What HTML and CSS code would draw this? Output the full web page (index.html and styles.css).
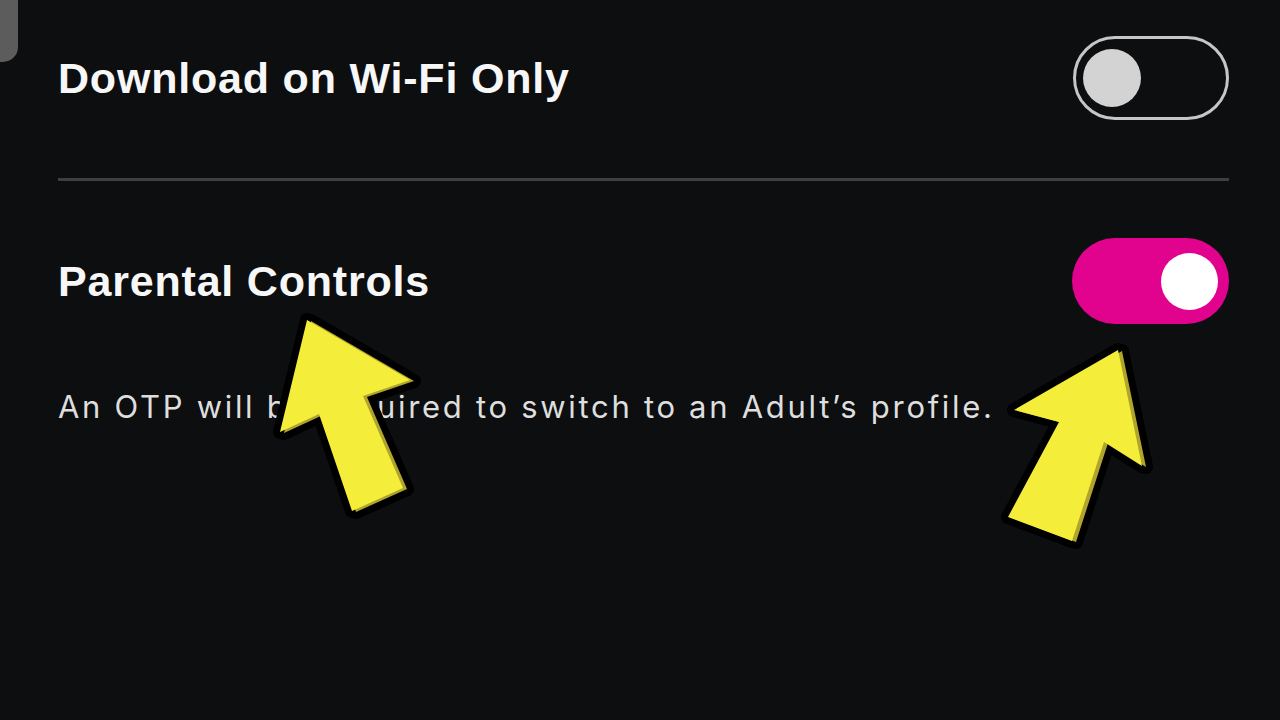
FILE: index.html
```html
<!DOCTYPE html>
<html lang="en">
<head>
  <meta charset="UTF-8">
  <meta name="viewport" content="width=device-width, initial-scale=1.0">
  <title>Settings</title>
  <link rel="stylesheet" href="styles.css">
</head>
<body>
  <div class="edge-tab"></div>

  <div class="settings">
    <div class="row row-first">
      <span class="row-title">Download on Wi-Fi Only</span>
      <div class="toggle"><span class="knob"></span></div>
    </div>

    <div class="divider"></div>

    <div class="row row-second">
      <span class="row-title">Parental Controls</span>
      <div class="toggle on"><span class="knob"></span></div>
    </div>

    <p class="hint">An OTP will be required to switch to an Adult’s profile.</p>
  </div>

  <!-- pointer arrows drawn over the screen -->
  <svg class="arrows" width="1280" height="720" viewBox="0 0 1280 720">
    <g fill="#000" stroke="#000" stroke-width="14" stroke-linejoin="round">
      <polygon points="307,320 410,380 363,396 403,488 352,511 319,414 280,432"/>
      <polygon transform="translate(4,1)" points="307,320 410,380 363,396 403,488 352,511 319,414 280,432"/>
      <polygon points="1118,350 1142,466 1104,442 1072,541 1008,517 1059,422 1014,410"/>
      <polygon transform="translate(4,1)" points="1118,350 1142,466 1104,442 1072,541 1008,517 1059,422 1014,410"/>
    </g>
    <polygon class="shade" transform="translate(4,1)" points="307,320 410,380 363,396 403,488 352,511 319,414 280,432"/>
    <polygon class="face" points="307,320 410,380 363,396 403,488 352,511 319,414 280,432"/>
    <polygon class="shade" transform="translate(4,1)" points="1118,350 1142,466 1104,442 1072,541 1008,517 1059,422 1014,410"/>
    <polygon class="face" points="1118,350 1142,466 1104,442 1072,541 1008,517 1059,422 1014,410"/>
  </svg>
</body>
</html>
```

FILE: styles.css
```css
body {
  margin: 0;
  background-color: #0d0e10;
  font-family: "Liberation Sans", Arial, sans-serif;
  color: #fff;
  width: 1280px;
  height: 720px;
  overflow: hidden;
  position: relative;
}
.edge-tab {
  position: absolute;
  left: 0;
  top: 0;
  width: 18px;
  height: 62px;
  background: #5c5c5c;
  border-bottom-right-radius: 15px;
}
.settings {
  padding: 0 51px 0 58px;
}
.row {
  display: flex;
  justify-content: space-between;
  align-items: center;
}
.row-first { padding: 36px 0 58px; }
.row-second { padding-top: 57px; }
.row-title {
  font-size: 43px;
  font-weight: bold;
  letter-spacing: 0.8px;
  color: #f7f7f7;
}
.divider {
  height: 3px;
  background: #3f3f41;
}
.toggle {
  box-sizing: border-box;
  width: 156px;
  height: 84px;
  border: 3px solid #c6c6c6;
  border-radius: 44px;
  padding: 0 7px;
  display: flex;
  align-items: center;
}
.knob {
  width: 58px;
  height: 58px;
  border-radius: 50%;
  background: #d3d3d3;
}
.toggle.on {
  width: 157px;
  height: 86px;
  border: none;
  background: #e1038d;
  padding: 0 11px;
  justify-content: flex-end;
}
.toggle.on .knob {
  width: 57px;
  height: 57px;
  background: #fff;
}
.hint {
  margin: 65px 0 0;
  font-family: Inter, "Liberation Sans", sans-serif;
  font-size: 31px;
  line-height: 36px;
  letter-spacing: 2.7px;
  color: #dedede;
}
.arrows {
  position: absolute;
  left: 0;
  top: 0;
}
.shade { fill: #b0a42c; }
.face { fill: #f4ee3b; }
```
